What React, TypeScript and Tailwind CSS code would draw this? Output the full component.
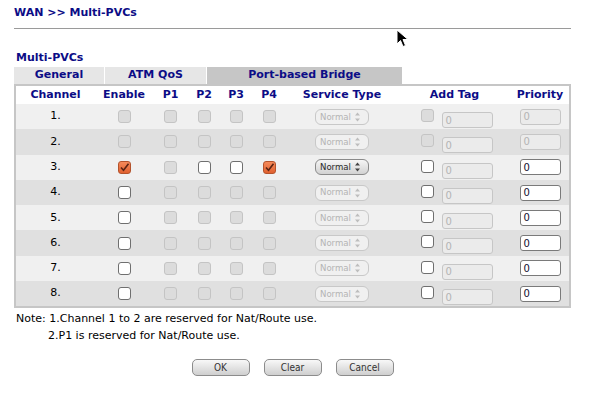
type Box = "dis" | "off" | "on";

const navy = "text-[#0c0c86]";

function Check({ kind }: { kind: Box }) {
  if (kind === "on") {
    return (
      <span className="flex h-[13px] w-[13px] items-center justify-center rounded-[3px] border border-[#b4532c] bg-gradient-to-b from-[#f58a5a] to-[#e0602e]">
        <svg width="11" height="11" viewBox="0 0 11 11">
          <path d="M2 5.5 L4.5 8.2 L9.5 1.8" fill="none" stroke="#5a2414" strokeWidth="1.6" />
        </svg>
      </span>
    );
  }
  if (kind === "off") {
    return <span className="block h-[13px] w-[13px] rounded-[3px] border border-[#6f6f6f] bg-white" />;
  }
  return <span className="block h-[13px] w-[13px] rounded-[3px] border border-[#c4c4c4] bg-[#dcdcdc]" />;
}

function Select({ enabled }: { enabled: boolean }) {
  return (
    <span
      className={
        enabled
          ? "flex h-[16px] w-[54px] items-center justify-between rounded-[6px] border border-[#8a8a8a] bg-gradient-to-b from-[#f6f6f6] to-[#d2d2d2] pl-[4px] pr-[7px] text-[9.5px] text-[#2a2a2a]"
          : "flex h-[16px] w-[54px] items-center justify-between rounded-[6px] border border-[#c8c8c8] bg-[#f0f0f0] pl-[4px] pr-[7px] text-[9.5px] text-[#b4b4b4]"
      }
      style={{ fontFamily: '"DejaVu Sans Condensed", "Liberation Sans Narrow", "Liberation Sans", sans-serif' }}
    >
      Normal
      <svg width="7" height="12" viewBox="0 0 7 12">
        <path d="M3.5 1.5 L6 4.5 L1 4.5 Z M1 7.5 L6 7.5 L3.5 10.5 Z" fill={enabled ? "#444" : "#bdbdbd"} />
      </svg>
    </span>
  );
}

function Field({ w, enabled }: { w: string; enabled: boolean }) {
  return (
    <span
      className={
        (enabled
          ? "border-[#7a7a7a] bg-white text-[#101030] "
          : "border-[#c6c6c6] bg-[#ebebeb] text-[#b4b4b4] ") +
        w +
        " flex h-[16px] items-center rounded-[3px] border pl-[3px] text-[10px]"
      }
    >
      0
    </span>
  );
}

const cols = "grid grid-cols-[79px_58px_35px_32px_32px_34px_112px_113px_58px]";

const rows = [1, 2, 3, 4, 5, 6, 7, 8];

export default function App() {
  return (
    <div
      className="relative h-[393px] w-[592px] bg-white text-[11px] text-black"
      style={{ fontFamily: '"DejaVu Sans", Verdana, sans-serif' }}
    >
      <div className="px-[14px] pt-[6px]">
        <h1 className={"text-[11px] font-bold leading-[14px] " + navy}>WAN &gt;&gt; Multi-PVCs</h1>
        <div className="mt-[8px] h-px w-[557px] bg-[#9a9a9a]" />

        <div className={"mt-[22px] pl-[2px] text-[11px] font-bold leading-[14px] " + navy}>Multi-PVCs</div>

        <div className={"mt-[2px] flex h-[17px] text-[11px] font-bold " + navy}>
          <div className="flex w-[90px] items-center justify-center bg-[#e6e6e6]">General</div>
          <div className="ml-px flex w-[101px] items-center justify-center bg-[#e6e6e6]">ATM QoS</div>
          <div className="ml-px flex w-[195px] items-center justify-center bg-[#c6c6c6]">Port-based Bridge</div>
        </div>

        <div className="w-[557px] border-2 border-[#c6c6c6]">
          <div className={cols + " h-[18px] items-center text-center font-bold " + navy}>
            <span>Channel</span>
            <span>Enable</span>
            <span>P1</span>
            <span>P2</span>
            <span>P3</span>
            <span>P4</span>
            <span>Service Type</span>
            <span>Add Tag</span>
            <span>Priority</span>
          </div>
          {rows.map((n) => {
            const reserved = n <= 2;
            const enable: Box = reserved ? "dis" : n === 3 ? "on" : "off";
            const p = (i: number): Box => {
              if (n !== 3 || i === 1) return "dis";
              return i === 4 ? "on" : "off";
            };
            return (
              <div
                key={n}
                className={
                  cols +
                  " h-[25.3px] items-center " +
                  (n % 2 === 1 ? "bg-[#f0f0f0]" : "bg-[#e0e0e0]")
                }
              >
                <span className="text-center">{n}.</span>
                <span className="flex justify-center">
                  <Check kind={enable} />
                </span>
                {[1, 2, 3, 4].map((i) => (
                  <span key={i} className="flex justify-center">
                    <Check kind={p(i)} />
                  </span>
                ))}
                <span className="flex justify-center">
                  <Select enabled={n === 3} />
                </span>
                <span className="flex h-full items-start justify-center gap-[8px] pl-[4px]">
                  <span className="mt-[5px]">
                    <Check kind={reserved ? "dis" : "off"} />
                  </span>
                  <span className="mt-[8px]">
                    <Field w="w-[51px]" enabled={false} />
                  </span>
                </span>
                <span className="flex justify-center">
                  <Field w="w-[41px]" enabled={!reserved} />
                </span>
              </div>
            );
          })}
        </div>

        <div className="mt-[2px] pl-[2px] leading-[17px]">
          <div>Note: 1.Channel 1 to 2 are reserved for Nat/Route use.</div>
          <div className="pl-[32px]">2.P1 is reserved for Nat/Route use.</div>
        </div>

        <div
          className="mt-[15px] flex w-[557px] justify-center gap-[14px] text-[10px] text-[#333]"
          style={{ fontFamily: '"DejaVu Sans Condensed", "Liberation Sans Narrow", "Liberation Sans", sans-serif' }}
        >
          {["OK", "Clear", "Cancel"].map((b) => (
            <button
              key={b}
              className="flex h-[17px] w-[58px] items-center justify-center rounded-[5px] border border-[#8c8c8c] bg-gradient-to-b from-[#f8f8f8] to-[#cfcfcf]"
            >
              {b}
            </button>
          ))}
        </div>
      </div>

      <svg className="absolute left-[396px] top-[29px]" width="14" height="19" viewBox="0 0 14 19">
        <path d="M1 1 L1 15 L4.5 11.5 L7 17.5 L9.5 16.5 L7 10.5 L12 10.5 Z" fill="#000" stroke="#fff" strokeWidth="1" />
      </svg>
    </div>
  );
}
